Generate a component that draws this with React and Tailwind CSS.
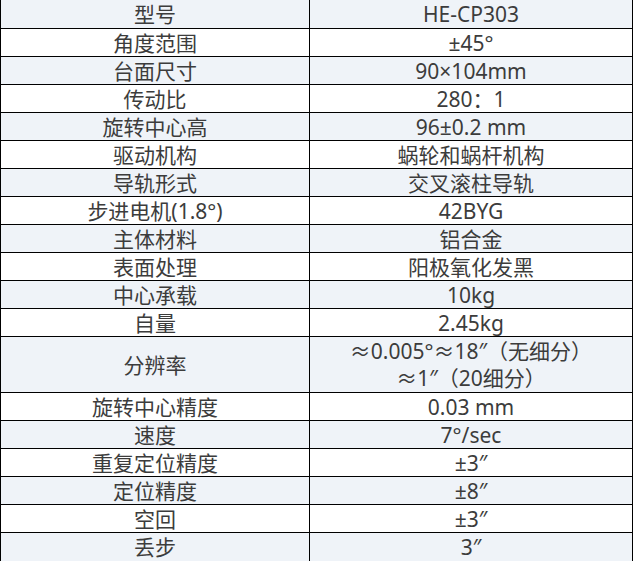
import React from "react";

const rows = [
  ["型号", "HE-CP303"],
  ["角度范围", "±45°"],
  ["台面尺寸", "90×104mm"],
  ["传动比", "280：1"],
  ["旋转中心高", "96±0.2 mm"],
  ["驱动机构", "蜗轮和蜗杆机构"],
  ["导轨形式", "交叉滚柱导轨"],
  ["步进电机(1.8°)", "42BYG"],
  ["主体材料", "铝合金"],
  ["表面处理", "阳极氧化发黑"],
  ["中心承载", "10kg"],
  ["自量", "2.45kg"],
  ["分辨率", ["≈0.005°≈18″（无细分）", "≈1″（20细分）"]],
  ["旋转中心精度", "0.03 mm"],
  ["速度", "7°/sec"],
  ["重复定位精度", "±3″"],
  ["定位精度", "±8″"],
  ["空回", "±3″"],
  ["丢步", "3″"],
];

export default function App() {
  return (
    <div
      className="w-[633px] border-x border-b border-black bg-white text-[21px] text-[#3c3c3c]"
      style={{ fontFamily: '"Noto Sans", "Noto Sans CJK SC", sans-serif' }}
    >
      {rows.map(([name, value], i) => {
        const multi = Array.isArray(value);
        const h = i === 0 ? "h-[29px]" : multi ? "h-[56px]" : "h-[28px]";
        const bg = i % 2 === 0 ? "bg-[#eff3f8]" : "bg-white";
        const border = i === rows.length - 1 ? "" : "border-b border-black";
        return (
          <div key={i} className={`flex ${h} ${bg} ${border}`}>
            <div className="flex w-[309px] shrink-0 items-center justify-center border-r border-black pt-px leading-none">
              {name}
            </div>
            <div className="flex flex-1 flex-col items-center justify-center pt-px leading-[27px]">
              {multi ? value.map((v) => <div key={v}>{v}</div>) : value}
            </div>
          </div>
        );
      })}
    </div>
  );
}
